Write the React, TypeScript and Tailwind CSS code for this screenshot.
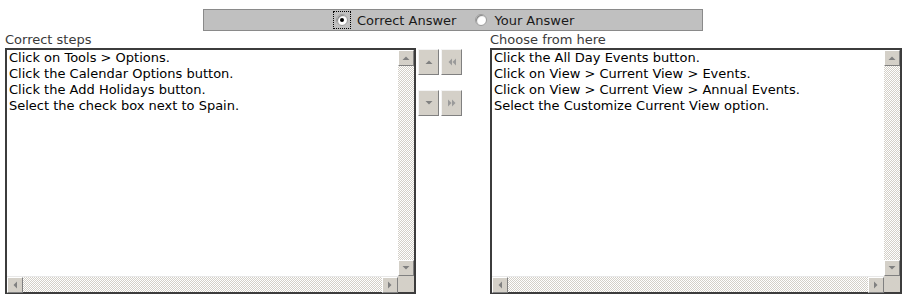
import React from "react";

const steps = [
  "Click on Tools > Options.",
  "Click the Calendar Options button.",
  "Click the Add Holidays button.",
  "Select the check box next to Spain.",
];
const choices = [
  "Click the All Day Events button.",
  "Click on View > Current View > Events.",
  "Click on View > Current View > Annual Events.",
  "Select the Customize Current View option.",
];

function Tri({ dir }: { dir: "up" | "down" | "left" | "right" }) {
  const pts: Record<string, string> = {
    up: "0.5,5 4,1.5 7.5,5",
    down: "0.5,1 4,4.5 7.5,1",
    left: "5,0.5 1.5,4 5,7.5",
    right: "1,0.5 4.5,4 1,7.5",
  };
  const horiz = dir === "up" || dir === "down";
  return (
    <svg width={horiz ? 8 : 6} height={horiz ? 6 : 8} viewBox={horiz ? "0 0 8 6" : "0 0 6 8"}>
      <polygon points={pts[dir]} fill="#808080" />
    </svg>
  );
}

function ScrollBtn({ dir }: { dir: "up" | "down" | "left" | "right" }) {
  return (
    <div className="w-[16px] h-[16px] bg-[#d4d0c8] border border-t-white border-l-white border-r-[#808080] border-b-[#808080] flex items-center justify-center shrink-0">
      <Tri dir={dir} />
    </div>
  );
}

const track =
  "bg-[image:repeating-conic-gradient(#d4d0c8_0%_25%,#ffffff_0%_50%)] bg-[length:2px_2px]";

function ListBox({ items, width }: { items: string[]; width: string }) {
  return (
    <div className={`${width} h-[246px] border-2 border-[#3c3c3c] flex flex-col bg-white`}>
      <div className="flex flex-1 min-h-0">
        <div className="flex-1 pl-[2px] text-[13px] leading-[16px] text-black">
          {items.map((t) => (
            <div key={t} className="whitespace-nowrap">{t}</div>
          ))}
        </div>
        <div className="w-[16px] flex flex-col">
          <ScrollBtn dir="up" />
          <div className={`flex-1 ${track}`} />
          <ScrollBtn dir="down" />
        </div>
      </div>
      <div className="h-[16px] flex">
        <div className="flex-1 flex border-t border-[#e8e8e8]">
          <ScrollBtn dir="left" />
          <div className={`flex-1 ${track}`} />
          <ScrollBtn dir="right" />
        </div>
        <div className="w-[16px] h-[16px] bg-[#d4d0c8]" />
      </div>
    </div>
  );
}

function MoveBtn({ children }: { children: React.ReactNode }) {
  return (
    <div className="w-[21px] h-[26px] bg-[#d4d0c8] border border-t-[#f4f4f4] border-l-[#f4f4f4] border-r-[#808080] border-b-[#808080] flex items-center justify-center">
      {children}
    </div>
  );
}

function Radio({ checked }: { checked: boolean }) {
  return (
    <span className="w-[12px] h-[12px] rounded-full bg-white border border-[#9a9a9a] flex items-center justify-center shadow-[inset_1px_1px_1px_#808080]">
      {checked && <span className="w-[4px] h-[4px] rounded-full bg-black" />}
    </span>
  );
}

export default function App() {
  return (
    <div
      className="w-[904px] h-[305px] bg-white overflow-hidden"
      style={{ fontFamily: '"DejaVu Sans", Verdana, sans-serif' }}
    >
      <div className="pt-[9px] pl-[203px]">
        <div className="w-[500px] h-[22px] bg-[#c0c0c0] border border-[#8a8a8a] flex items-center text-[13px] text-[#1a1a1a]">
          <div className="ml-[129px] border border-dotted border-black h-[18px] px-[2px] flex items-center">
            <Radio checked />
          </div>
          <span className="ml-[6px] pt-[1px]">Correct Answer</span>
          <span className="ml-[19px]"><Radio checked={false} /></span>
          <span className="ml-[7px] pt-[1px]">Your Answer</span>
        </div>
      </div>
      <div className="flex pl-[5px] mt-[1px]">
        <div className="flex flex-col">
          <div className="text-[13px] leading-[16px] text-[#3a3a3a] h-[16px]">Correct steps</div>
          <ListBox items={steps} width="w-[411px]" />
        </div>
        <div className="ml-[2px] mt-[17px] flex flex-col gap-[15px]">
          <div className="flex gap-[2px]">
            <MoveBtn><Tri dir="up" /></MoveBtn>
            <MoveBtn>
              <svg width="10" height="8" viewBox="0 0 10 8">
                <polygon points="5,0.5 1.5,4 5,7.5" fill="#9a9a9a" />
                <polygon points="9,0.5 5.5,4 9,7.5" fill="#9a9a9a" />
              </svg>
            </MoveBtn>
          </div>
          <div className="flex gap-[2px]">
            <MoveBtn><Tri dir="down" /></MoveBtn>
            <MoveBtn>
              <svg width="10" height="8" viewBox="0 0 10 8">
                <polygon points="1,0.5 4.5,4 1,7.5" fill="#9a9a9a" />
                <polygon points="5,0.5 8.5,4 5,7.5" fill="#9a9a9a" />
              </svg>
            </MoveBtn>
          </div>
        </div>
        <div className="ml-[28px] flex flex-col">
          <div className="text-[13px] leading-[16px] text-[#3a3a3a] h-[16px]">Choose from here</div>
          <ListBox items={choices} width="w-[412px]" />
        </div>
      </div>
    </div>
  );
}
